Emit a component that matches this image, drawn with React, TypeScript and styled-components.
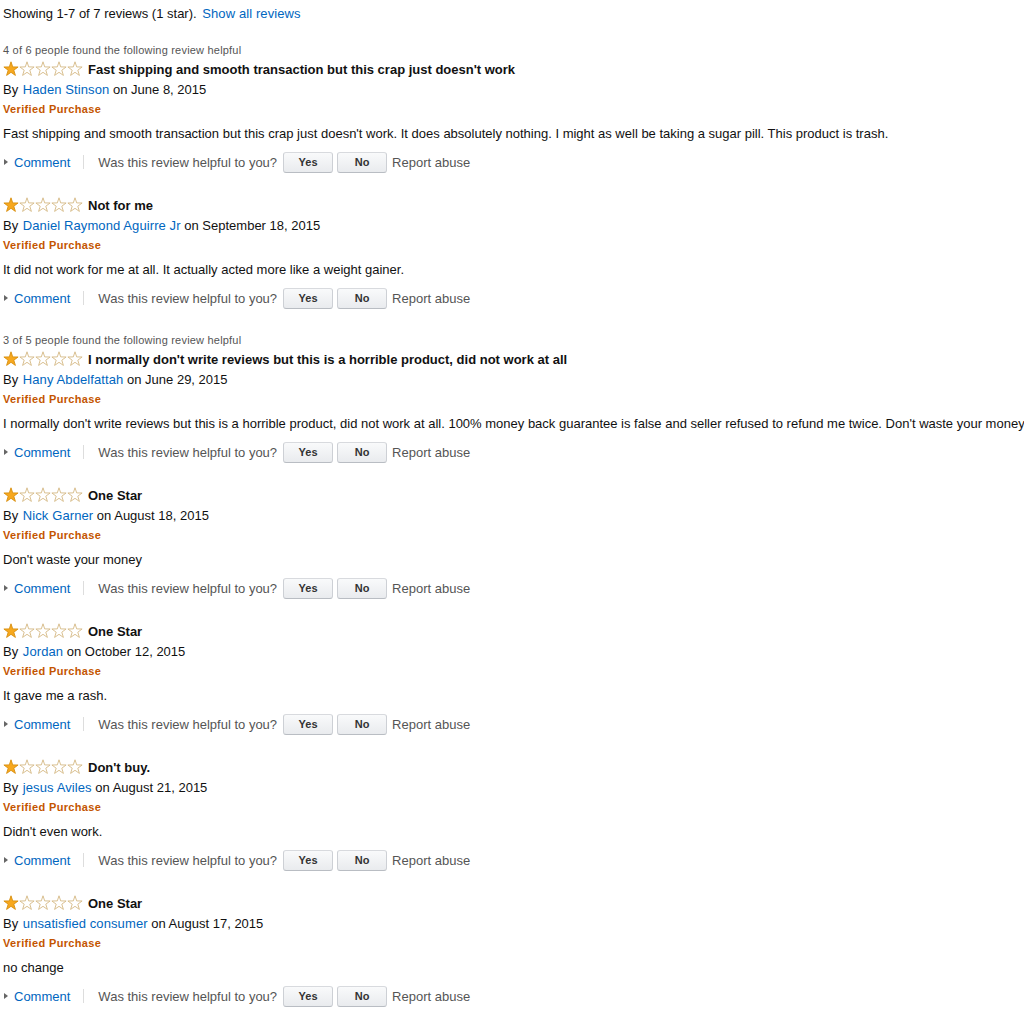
import React from "react";
import styled, { createGlobalStyle } from "styled-components";

const GlobalStyle = createGlobalStyle`
  html, body {
    margin: 0;
    padding: 0;
    background: #ffffff;
    overflow-x: hidden;
  }
  body {
    font-family: "Liberation Sans", Arial, sans-serif;
    color: #111111;
  }
`;

const Page = styled.div`
  padding: 4px 0 20px 3px;
  width: 1021px;
  overflow: hidden;
  font-size: 13px;
`;

const Header = styled.div`
  line-height: 19px;
  height: 19px;
  font-size: 13px;
  color: #111;
`;

const Link = styled.a`
  color: #0066c0;
  text-decoration: none;
  cursor: pointer;
`;

const HeaderLink = styled(Link)`
  margin-left: 2px;
  letter-spacing: 0.1px;
`;

const List = styled.div`
  display: flex;
  flex-direction: column;
  gap: 22px;
  margin-top: 18px;
`;

const Review = styled.div`
  display: flex;
  flex-direction: column;
`;

const HelpfulCount = styled.div`
  font-size: 11px;
  line-height: 18px;
  height: 18px;
  color: #555555;
  letter-spacing: 0.2px;
`;

const TitleRow = styled.div`
  display: flex;
  align-items: center;
  gap: 5px;
  height: 20px;
  margin-bottom: 1px;
`;

const Stars = styled.div`
  display: flex;
  width: 80px;
  height: 16px;
`;

const Title = styled.span`
  font-weight: bold;
  font-size: 13px;
  color: #111;
`;

const ByLine = styled.div`
  line-height: 20px;
  height: 20px;
  font-size: 13px;
  color: #111;
`;

const Author = styled(Link)`
  margin-left: 1px;
  letter-spacing: 0.1px;
`;

const Verified = styled.div`
  font-size: 11px;
  font-weight: bold;
  color: #c45500;
  line-height: 19px;
  height: 19px;
  letter-spacing: 0.35px;
`;

const Body = styled.div`
  margin-top: 5px;
  line-height: 19px;
  font-size: 13px;
  color: #111;
  white-space: nowrap;
`;

const ActionRow = styled.div`
  display: flex;
  align-items: center;
  height: 22px;
  margin-top: 8px;
  font-size: 13px;
`;

const Arrow = styled.span`
  display: inline-block;
  width: 0;
  height: 0;
  border-top: 3.5px solid transparent;
  border-bottom: 3.5px solid transparent;
  border-left: 4px solid #666;
  margin: 0 6px 0 1px;
`;

const Separator = styled.span`
  width: 1px;
  height: 14px;
  background: #dddddd;
  margin: 0 14px 0 13px;
`;

const Question = styled.span`
  color: #555555;
  margin-right: 6px;
`;

const VoteButton = styled.button`
  width: 50px;
  height: 21px;
  padding: 0;
  margin-right: 4px;
  border: 1px solid #cdd0d5;
  border-top-color: #d8dade;
  border-bottom-color: #b9bdc3;
  border-radius: 3px;
  background: linear-gradient(to bottom, #f9fafb, #e9ebee);
  font-family: "Liberation Sans", Arial, sans-serif;
  font-size: 11px;
  font-weight: bold;
  color: #333;
  cursor: pointer;
`;

const Report = styled.span`
  color: #555555;
  margin-left: 1px;
`;

const STAR_POINTS =
  "8,0.8 9.7,5.9 15.1,6 10.8,9.2 12.4,14.4 8,11.3 3.6,14.4 5.2,9.2 0.9,6 6.3,5.9";

const Star: React.FC<{ filled: boolean }> = ({ filled }) => (
  <svg width="16" height="16" viewBox="0 0 16 16">
    <polygon
      points={STAR_POINTS}
      fill={filled ? "#f7a81e" : "#ffffff"}
      stroke={filled ? "#d88f0f" : "#d5b985"}
      strokeWidth="0.9"
      strokeLinejoin="round"
    />
  </svg>
);

const StarRating: React.FC<{ value: number }> = ({ value }) => (
  <Stars>
    {[1, 2, 3, 4, 5].map((i) => (
      <Star key={i} filled={i <= value} />
    ))}
  </Stars>
);

type ReviewData = {
  helpful?: string;
  title: string;
  author: string;
  date: string;
  body: string;
};

const reviews: ReviewData[] = [
  {
    helpful: "4 of 6 people found the following review helpful",
    title: "Fast shipping and smooth transaction but this crap just doesn't work",
    author: "Haden Stinson",
    date: "June 8, 2015",
    body: "Fast shipping and smooth transaction but this crap just doesn't work. It does absolutely nothing. I might as well be taking a sugar pill. This product is trash.",
  },
  {
    title: "Not for me",
    author: "Daniel Raymond Aguirre Jr",
    date: "September 18, 2015",
    body: "It did not work for me at all. It actually acted more like a weight gainer.",
  },
  {
    helpful: "3 of 5 people found the following review helpful",
    title: "I normally don't write reviews but this is a horrible product, did not work at all",
    author: "Hany Abdelfattah",
    date: "June 29, 2015",
    body: "I normally don't write reviews but this is a horrible product, did not work at all. 100% money back guarantee is false and seller refused to refund me twice. Don't waste your money",
  },
  {
    title: "One Star",
    author: "Nick Garner",
    date: "August 18, 2015",
    body: "Don't waste your money",
  },
  {
    title: "One Star",
    author: "Jordan",
    date: "October 12, 2015",
    body: "It gave me a rash.",
  },
  {
    title: "Don't buy.",
    author: "jesus Aviles",
    date: "August 21, 2015",
    body: "Didn't even work.",
  },
  {
    title: "One Star",
    author: "unsatisfied consumer",
    date: "August 17, 2015",
    body: "no change",
  },
];

const ReviewItem: React.FC<{ review: ReviewData }> = ({ review }) => (
  <Review>
    {review.helpful && <HelpfulCount>{review.helpful}</HelpfulCount>}
    <TitleRow>
      <StarRating value={1} />
      <Title>{review.title}</Title>
    </TitleRow>
    <ByLine>
      By <Author>{review.author}</Author> on {review.date}
    </ByLine>
    <Verified>Verified Purchase</Verified>
    <Body>{review.body}</Body>
    <ActionRow>
      <Arrow />
      <Link>Comment</Link>
      <Separator />
      <Question>Was this review helpful to you?</Question>
      <VoteButton>Yes</VoteButton>
      <VoteButton>No</VoteButton>
      <Report>Report abuse</Report>
    </ActionRow>
  </Review>
);

export default function App() {
  return (
    <>
      <GlobalStyle />
      <Page>
        <Header>
          Showing 1-7 of 7 reviews (1 star). <HeaderLink>Show all reviews</HeaderLink>
        </Header>
        <List>
          {reviews.map((r, i) => (
            <ReviewItem key={i} review={r} />
          ))}
        </List>
      </Page>
    </>
  );
}
